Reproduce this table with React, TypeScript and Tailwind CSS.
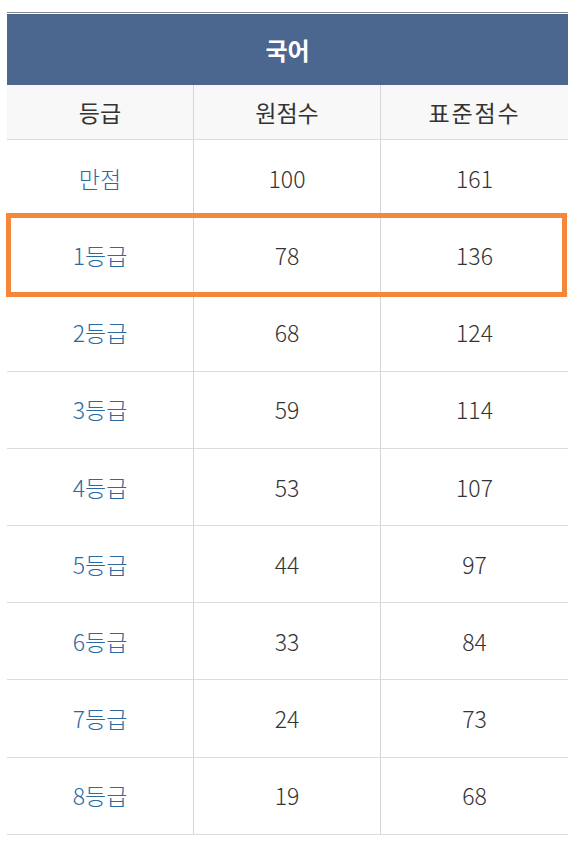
const ROWS = [
  ['만점', '100', '161'],
  ['1등급', '78', '136'],
  ['2등급', '68', '124'],
  ['3등급', '59', '114'],
  ['4등급', '53', '107'],
  ['5등급', '44', '97'],
  ['6등급', '33', '84'],
  ['7등급', '24', '73'],
  ['8등급', '19', '68'],
];

const font = { fontFamily: '"Noto Sans CJK KR", "Noto Sans", sans-serif' };

export default function App() {
  return (
    <div className="bg-white w-[575px] h-[846px] pt-3" style={font}>
      <div className="relative mx-[7px] w-[561px]">
        <div className="h-px bg-[#8a8a8a]" />
        <div className="h-px bg-white" />
        <div className="h-[71px] bg-[#4b6790] flex items-center justify-center text-white text-[24px] font-bold">
          국어
        </div>
        <div className="grid grid-cols-3 h-[55px] bg-[#f8f8f8] border-b border-[#dcdcdc] text-[23px] text-[#333]">
          <div className="flex items-center justify-center border-r border-[#d6d6d6]">등급</div>
          <div className="flex items-center justify-center border-r border-[#d6d6d6]">원점수</div>
          <div className="flex items-center justify-center tracking-[0.08em]">표준점수</div>
        </div>
        {ROWS.map(([grade, raw, std]) => (
          <div key={grade} className="grid grid-cols-3 h-[77.2px] border-b border-[#dcdcdc] text-[23px] font-light">
            <div className="flex items-center justify-center border-r border-[#d6d6d6] text-[#2a6aa3]">{grade}</div>
            <div className="flex items-center justify-center border-r border-[#d6d6d6] text-[#333]">{raw}</div>
            <div className="flex items-center justify-center text-[#333]">{std}</div>
          </div>
        ))}
        <div className="absolute left-[-1px] top-[201px] w-[561px] h-[84px] border-[5px] border-[#f5873a]" />
      </div>
    </div>
  );
}
